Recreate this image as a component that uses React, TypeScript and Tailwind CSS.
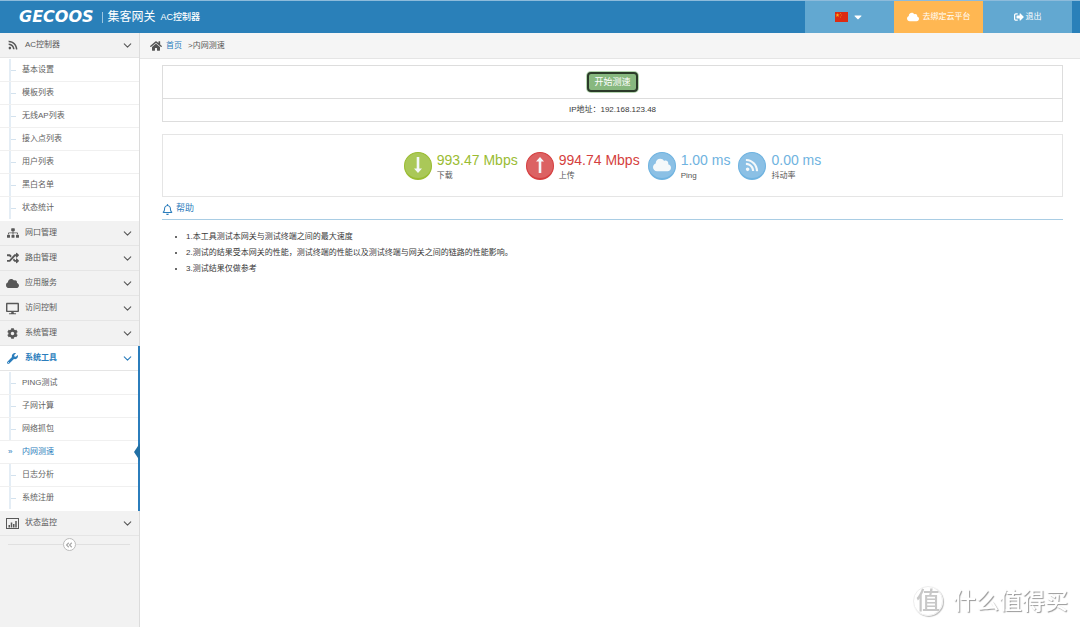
import type { ReactNode } from "react";
import {
  FaAngleDoubleLeft,
  FaCaretDown,
  FaCloud,
  FaCog,
  FaDesktop,
  FaHome,
  FaRandom,
  FaRegBell,
  FaRss,
  FaSignOutAlt,
  FaSitemap,
  FaWrench,
} from "react-icons/fa";
import { ChevronDown } from "lucide-react";

type MenuGroup = {
  label: string;
  icon: ReactNode;
  active?: boolean;
  items?: string[];
};

const CURRENT = "内网测速";

function BarChartIcon() {
  return (
    <svg width="13" height="11" viewBox="0 0 26 22" fill="none">
      <rect x="1" y="1" width="24" height="20" stroke="currentColor" strokeWidth="2" />
      <path d="M6.500 19v-5M11 19V9M15.500 19v-7M20 19V6" stroke="currentColor" strokeWidth="3" />
    </svg>
  );
}

function ChinaFlag() {
  return (
    <svg width="13" height="10" viewBox="0 0 26 20">
      <rect width="26" height="20" fill="#dd2b12" />
      <path d="M5 2l1 3h3l-2.4 1.8.9 3L5 8 2.500 9.800l.9-3L1 5h3z" fill="#fcb116" />
      <circle cx="11" cy="3" r="1" fill="#f0861a" />
      <circle cx="13" cy="6" r="1" fill="#f0861a" />
      <circle cx="11" cy="10" r="1" fill="#f0861a" />
    </svg>
  );
}

function LongArrow({ up }: { up?: boolean }) {
  return (
    <svg width="8" height="16" viewBox="0 0 8 16" fill="currentColor">
      {up ? <path d="M4 0l4 4.500H5.300V16H2.700V4.500H0z" /> : <path d="M4 16l4-4.500H5.300V0H2.700v11.500H0z" />}
    </svg>
  );
}

const menu: MenuGroup[] = [
  {
    label: "AC控制器",
    icon: <FaRss size={10} />,
    items: ["基本设置", "模板列表", "无线AP列表", "接入点列表", "用户列表", "黑白名单", "状态统计"],
  },
  { label: "网口管理", icon: <FaSitemap size={12} /> },
  { label: "路由管理", icon: <FaRandom size={12} /> },
  { label: "应用服务", icon: <FaCloud size={13} /> },
  { label: "访问控制", icon: <FaDesktop size={13} /> },
  { label: "系统管理", icon: <FaCog size={11} /> },
  {
    label: "系统工具",
    icon: <FaWrench size={11} />,
    active: true,
    items: ["PING测试", "子网计算", "网络抓包", "内网测速", "日志分析", "系统注册"],
  },
  { label: "状态监控", icon: <BarChartIcon /> },
];

const stats = [
  {
    value: "993.47 Mbps",
    label: "下载",
    icon: <LongArrow />,
    circle: "border-[#9abc32] bg-[#aac858]",
    text: "text-[#9abc32]",
  },
  {
    value: "994.74 Mbps",
    label: "上传",
    icon: <LongArrow up />,
    circle: "border-[#d53f40] bg-[#dc6263]",
    text: "text-[#d53f40]",
  },
  {
    value: "1.00 ms",
    label: "Ping",
    icon: <FaCloud size={18} />,
    circle: "border-[#6fb3e0] bg-[#8bc0e5]",
    text: "text-[#6fb3e0]",
  },
  {
    value: "0.00 ms",
    label: "抖动率",
    icon: <FaRss size={14} />,
    circle: "border-[#6fb3e0] bg-[#8bc0e5]",
    text: "text-[#6fb3e0]",
  },
];

const help = [
  "1.本工具测试本网关与测试终端之间的最大速度",
  "2.测试的结果受本网关的性能，测试终端的性能以及测试终端与网关之间的链路的性能影响。",
  "3.测试结果仅做参考",
];

function Header() {
  return (
    <header className="flex h-[33px] items-stretch border-t border-[#8dbbdb] bg-[#2a80b9] text-white">
      <div className="flex items-center pl-[19px]">
        <span className="font-['DejaVu_Sans',sans-serif] text-[16px] leading-4 font-bold italic">GECOOS</span>
        <span className="ml-2 h-[11px] w-px bg-[#9cc6e0]" />
        <span className="ml-[5px] text-[12px] leading-4">集客网关</span>
        <span className="ml-[5px] text-[9px] leading-4 font-medium">AC控制器</span>
      </div>
      <nav className="mr-2 ml-auto flex text-[8px]">
        <button type="button" aria-label="语言" className="flex w-[89px] items-center justify-center gap-1 bg-[#62a8d1]">
          <ChinaFlag />
          <FaCaretDown size={12} />
        </button>
        <a href="#cloud" className="flex w-[89px] items-center justify-center gap-1 bg-[#ffb752]">
          <FaCloud size={12} />
          去绑定云平台
        </a>
        <a href="#logout" className="flex w-[89px] items-center justify-center gap-0.5 bg-[#62a8d1]">
          <FaSignOutAlt size={10} />
          退出
        </a>
      </nav>
    </header>
  );
}

function SubItem({ label }: { label: string }) {
  const current = label === CURRENT;
  return (
    <li className="relative">
      <a
        href="#page"
        className={`flex h-[22px] items-center ${current ? "text-[#2b7dbc]" : "text-[#616161]"}`}
      >
        {current ? (
          <span className="w-[22px] pl-2 leading-none">»</span>
        ) : (
          <span className="flex w-[22px] items-center self-stretch pl-[9px]">
            <span className="w-0.5 self-stretch bg-[#e4edf5]" />
            <span className="h-px w-[5px] bg-[#d3e2ee]" />
          </span>
        )}
        {label}
      </a>
      {current && (
        <svg className="absolute top-0.5 -right-0.5" width="6" height="18" viewBox="0 0 6 18">
          <path d="M6 0L0 9l6 9z" fill="#2270a5" />
        </svg>
      )}
    </li>
  );
}

function Sidebar() {
  return (
    <aside className="w-[140px] shrink-0 bg-[#f2f2f2] text-[8px] shadow-[inset_-1px_0_0_#dcdcdc]">
      <ul>
        {menu.map((group) => (
          <li key={group.label} className={group.active ? "border-r-2 border-[#2b7dbc]" : "border-r border-[#dcdcdc]"}>
            <a
              href="#group"
              className={`flex h-[25px] items-center border-b border-[#e5e5e5] ${
                group.active ? "bg-white font-bold text-[#2b7dbc]" : "text-[#585858]"
              }`}
            >
              <span className="flex w-[25px] justify-center">{group.icon}</span>
              <span className="flex-1">{group.label}</span>
              <span className={group.active ? "mr-1" : "mr-[5px]"}>
                <ChevronDown size={13} />
              </span>
            </a>
            {group.items && (
              <ul className="divide-y divide-[#f0f0f0] bg-white pt-px pb-0.5">
                {group.items.map((item) => (
                  <SubItem key={item} label={item} />
                ))}
              </ul>
            )}
          </li>
        ))}
      </ul>
      <div className="flex items-center pt-0.5 pr-[10px] pl-2">
        <span className="h-px flex-1 bg-[#e0e0e0]" />
        <button
          type="button"
          aria-label="收起菜单"
          className="flex size-[13px] items-center justify-center rounded-full border border-[#bbb] bg-white text-[#aaa]"
        >
          <FaAngleDoubleLeft size={8} />
        </button>
        <span className="h-px flex-1 bg-[#e0e0e0]" />
      </div>
    </aside>
  );
}

export default function App() {
  return (
    <div className="flex min-h-screen flex-col bg-white font-['Liberation_Sans','Noto_Sans_CJK_SC',sans-serif] text-[#393939]">
      <Header />
      <div className="flex flex-1">
        <Sidebar />
        <main className="min-w-0 flex-1 text-[8px]">
          <nav className="flex h-[26px] items-center border-b border-[#e5e5e5] bg-[#f5f5f5] pl-2.5 text-[#555]">
            <FaHome size={12} />
            <a href="#home" className="ml-1 text-[#2b7dbc]">
              首页
            </a>
            <span className="ml-1.5">&gt;{CURRENT}</span>
          </nav>

          <div className="pt-1.5 pr-[17px] pl-[22px]">
            <section className="border border-[#ddd]">
              <div className="flex h-[33px] items-center justify-center border-b border-[#ddd]">
                <button
                  type="button"
                  className="h-5 rounded-sm border-2 border-[#2b3a29] bg-[#87b87f] px-[5px] text-[9px] leading-4 text-white shadow-[0_0_0_1px_#b5d6b0]"
                >
                  开始测速
                </button>
              </div>
              <p className="flex h-[22px] items-center justify-center">IP地址：192.168.123.48</p>
            </section>

            <section className="mt-3 flex h-[63px] items-center justify-center gap-2 border border-[#e5e5e5]">
              {stats.map((stat) => (
                <div key={stat.label} className="flex items-center gap-[5px]">
                  <span
                    className={`flex size-7 items-center justify-center rounded-full border border-b-2 text-[#f4f8fa] ${stat.circle}`}
                  >
                    {stat.icon}
                  </span>
                  <div className="pt-[5px]">
                    <p className={`text-[14px] leading-4 ${stat.text}`}>{stat.value}</p>
                    <p className="leading-4 text-[#555]">{stat.label}</p>
                  </div>
                </div>
              ))}
            </section>

            <h2 className="flex h-[23px] items-center gap-[3px] border-b border-[#a9cde4] pt-0.5 text-[9px] text-[#2b7dbc]">
              <FaRegBell size={11} />
              帮助
            </h2>
            <ul className="mt-[9px] list-disc pl-6 leading-4">
              {help.map((line) => (
                <li key={line}>{line}</li>
              ))}
            </ul>
          </div>
        </main>
      </div>

      <div className="fixed right-3 bottom-2.5 flex items-center gap-2.5 text-[23px] leading-8 font-medium text-white [text-shadow:1px_1px_1px_#999]">
        <span className="flex size-[30px] items-center justify-center rounded-full border border-[#eee] text-[24px] text-[#c8c8c8] shadow-[1px_1px_1px_#bbb] [text-shadow:none]">
          值
        </span>
        什么值得买
      </div>
    </div>
  );
}
